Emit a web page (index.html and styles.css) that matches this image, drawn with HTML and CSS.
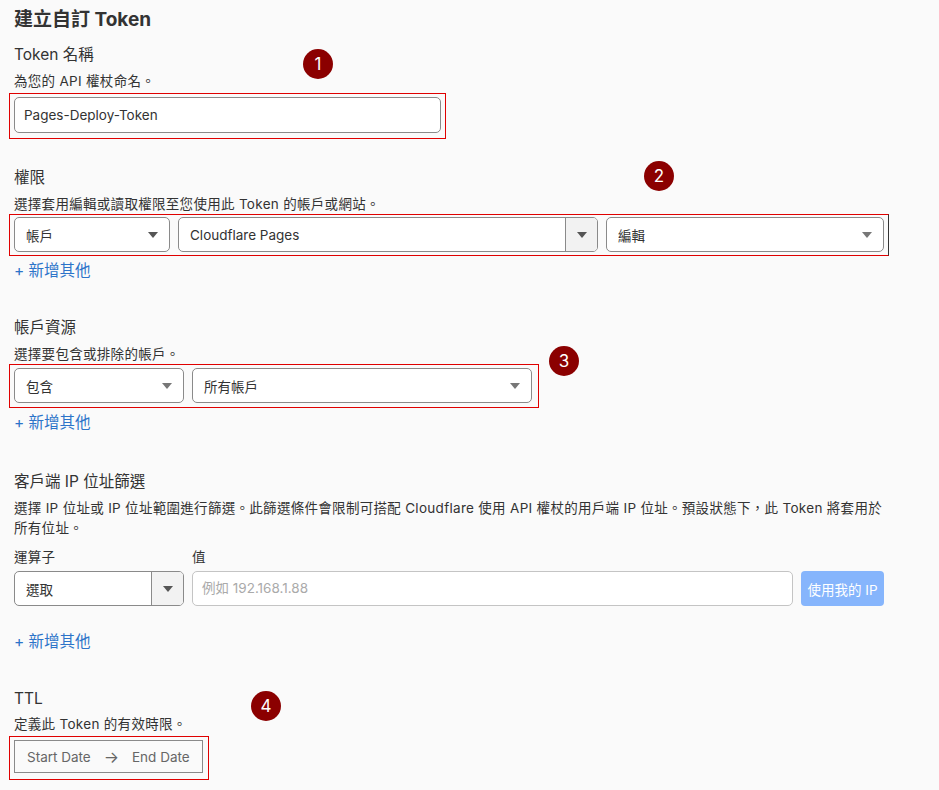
FILE: index.html
```html
<!DOCTYPE html>
<html lang="zh-Hant">
<head>
      <meta charset="UTF-8">
      <meta name="viewport" content="width=device-width, initial-scale=1.0">
      <title>建立自訂 Token</title>
      <link rel="stylesheet" href="styles.css">
</head>
<body>
      <div class="page">
            <h1 class="page-title">建立自訂 Token</h1>

            <!-- Token 名稱 -->
            <section class="section first">
                  <span class="step step-1">1</span>
                  <div class="label">Token 名稱</div>
                  <div class="desc">為您的 API 權杖命名。</div>
                  <div class="mark mark-name">
                        <div class="input">Pages-Deploy-Token</div>
                  </div>
            </section>

            <!-- 權限 -->
            <section class="section second">
                  <span class="step step-2">2</span>
                  <div class="label">權限</div>
                  <div class="desc">選擇套用編輯或讀取權限至您使用此 Token 的帳戶或網站。</div>
                  <div class="mark mark-perm">
                        <div class="row">
                              <div class="select w-156"><span>帳戶</span><i class="caret"></i></div>
                              <div class="select split w-420"><span>Cloudflare Pages</span><b class="caret-box"><i class="caret"></i></b></div>
                              <div class="select grow"><span>編輯</span><i class="caret light"></i></div>
                        </div>
                  </div>
                  <a class="add" href="#">+ 新增其他</a>
            </section>

            <!-- 帳戶資源 -->
            <section class="section">
                  <span class="step step-3">3</span>
                  <div class="label">帳戶資源</div>
                  <div class="desc">選擇要包含或排除的帳戶。</div>
                  <div class="mark mark-res">
                        <div class="row">
                              <div class="select w-170"><span>包含</span><i class="caret light"></i></div>
                              <div class="select w-340"><span>所有帳戶</span><i class="caret light"></i></div>
                        </div>
                  </div>
                  <a class="add" href="#">+ 新增其他</a>
            </section>

            <!-- 客戶端 IP 位址篩選 -->
            <section class="section ip">
                  <div class="label">客戶端 IP 位址篩選</div>
                  <div class="desc wrap">選擇 IP 位址或 IP 位址範圍進行篩選。此篩選條件會限制可搭配 Cloudflare 使用 API 權杖的用戶端 IP 位址。預設狀態下，此 Token 將套用於<br>所有位址。</div>
                  <div class="ip-grid">
                        <div class="field-label">運算子</div>
                        <div class="field-label">值</div>
                        <div></div>
                        <div class="select split"><span>選取</span><b class="caret-box"><i class="caret"></i></b></div>
                        <div class="input placeholder">例如 192.168.1.88</div>
                        <button class="btn-ip">使用我的 IP</button>
                  </div>
                  <a class="add add-ip" href="#">+ 新增其他</a>
            </section>

            <!-- TTL -->
            <section class="section ttl">
                  <span class="step step-4">4</span>
                  <div class="label">TTL</div>
                  <div class="desc">定義此 Token 的有效時限。</div>
                  <div class="mark mark-ttl">
                        <div class="date-range">
                              <span>Start Date</span>
                              <span class="arrow">&rarr;</span>
                              <span>End Date</span>
                        </div>
                  </div>
            </section>
      </div>
</body>
</html>
```

FILE: styles.css
```css
*{
      box-sizing: border-box;
}

body{
      margin: 0;
      background: #fafafa;
      color: #333;
      font-family: Inter, "Noto Sans CJK TC", sans-serif;
}

.page{
      width: 870px;
      margin-left: 14px;
      padding-top: 8px;
}

.page-title{
      margin: 0;
      font-size: 19px;
      line-height: 24px;
      font-weight: 700;
      color: #333;
}

.section{
      position: relative;
      margin-top: 35px;
}
.section.first{
      margin-top: 12px;
}
.section.second{
      margin-top: 28px;
}
.section.ip{
      margin-top: 37px;
}

.label{
      font-size: 15.5px;
      line-height: 22px;
}

.desc{
      margin-top: 6px;
      font-size: 13.5px;
      letter-spacing: 0.3px;
      line-height: 18px;
}
.desc.wrap{
      margin-top: 5px;
      line-height: 20px;
}
.ttl .desc{
      margin-top: 5px;
}

/* red annotation frames */
.mark{
      border: 1px solid #e00000;
      margin-left: -5px;
      padding: 2px 4px 3px;
}
.mark-name{
      width: 437px;
      margin-top: 3px;
      padding: 3px 4px 5px;
}
.mark-perm{
      width: 880px;
      margin-top: 1px;
      border-right-color: #333;
}
.mark-res{
      width: 530px;
      margin-top: 1px;
      padding: 3px 4px 4px;
}
.mark-ttl{
      width: 200px;
      margin-top: 3px;
      padding: 3px 4px 6px;
}

.step{
      position: absolute;
      width: 30px;
      height: 30px;
      border-radius: 50%;
      background: #8b0000;
      color: #fff;
      font-size: 17px;
      line-height: 30px;
      text-align: center;
}
.step-1{ left: 289px; top: 5px; }
.step-2{ left: 630px; top: -6px; }
.step-3{ left: 535px; top: 29px; }
.step-4{ left: 237px; top: 3px; }

.input{
      height: 36px;
      border: 1px solid #8a8a8a;
      border-radius: 5px;
      background: #fff;
      padding: 0 9px;
      font-size: 13.5px;
      line-height: 34px;
      color: #333;
}
.input.placeholder{
      height: 35px;
      line-height: 33px;
      border-color: #c4c4c4;
      color: #aaa;
}

.row{
      display: flex;
      gap: 8px;
}

.select{
      display: flex;
      align-items: center;
      justify-content: space-between;
      height: 35px;
      border: 1px solid #8a8a8a;
      border-radius: 5px;
      background: #fff;
      padding: 0 11px;
      font-size: 13.5px;
      color: #333;
      overflow: hidden;
}
.select.split{
      padding-right: 0;
}
.w-156{ width: 156px; flex: none; }
.w-420{ width: 420px; flex: none; }
.w-170{ width: 170px; flex: none; }
.w-340{ width: 340px; flex: none; }
.grow{ flex: 1; }

.caret{
      display: block;
      width: 0;
      height: 0;
      border-left: 5px solid transparent;
      border-right: 5px solid transparent;
      border-top: 6px solid #555;
}
.caret.light{
      border-top-color: #777;
}
.caret-box{
      display: flex;
      align-items: center;
      justify-content: center;
      width: 32px;
      height: 100%;
      border-left: 1px solid #8a8a8a;
      background: #f2f2f2;
}

.add{
      display: inline-block;
      margin-top: 4px;
      font-size: 15.5px;
      line-height: 22px;
      color: #2c74c9;
      text-decoration: none;
}
.add-ip{
      margin-top: 25px;
}

.ip-grid{
      display: grid;
      grid-template-columns: 170px 1fr 83px;
      column-gap: 8px;
      margin-top: 9px;
}
.field-label{
      font-size: 13.5px;
      letter-spacing: 0.3px;
      line-height: 20px;
      margin-bottom: 4px;
}
.btn-ip{
      height: 35px;
      border: none;
      border-radius: 4px;
      background: #86b5fc;
      color: #fff;
      font-family: inherit;
      font-size: 13.5px;
      padding: 0;
}

.date-range{
      display: flex;
      align-items: center;
      width: 189px;
      height: 33px;
      border: 1px solid #8a8a8a;
      padding: 0 0 0 12px;
      font-size: 13.5px;
      color: #666;
      white-space: nowrap;
}
.date-range .arrow{
      margin: 0 13px;
      font-size: 16px;
}
```
